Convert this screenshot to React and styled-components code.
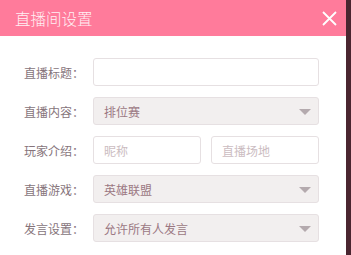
import React from "react";
import styled, { createGlobalStyle } from "styled-components";

const Global = createGlobalStyle`
  html, body { margin: 0; padding: 0; background: #4a2530; overflow: hidden; height: 100%; }
  body { font-family: "Noto Sans CJK SC", "Noto Sans", sans-serif; }
  #root { height: 100%; }
`;

const Dialog = styled.div`
  width: 346px;
  height: 100%;
  background: #fff;
`;

const Header = styled.div`
  height: 36px;
  background: #ff7b9b;
  display: flex;
  align-items: center;
  justify-content: space-between;
  padding: 0 9px 0 15px;
  box-sizing: border-box;
`;

const Title = styled.div`
  color: #fff0f4;
  font-size: 15.5px;
  font-weight: 300;
`;

const Close = styled.button`
  border: 0;
  background: transparent;
  padding: 0;
  width: 15px;
  height: 15px;
  display: flex;
  cursor: pointer;
`;

const Form = styled.div`
  display: flex;
  flex-direction: column;
  gap: 11px;
  padding: 22px 27px 0 24px;
`;

const Row = styled.div`
  display: flex;
  align-items: center;
  height: 28px;
`;

const Label = styled.div`
  width: 69px;
  font-size: 12px;
  color: #86747b;
  white-space: nowrap;
`;

const Fields = styled.div`
  flex: 1;
  display: flex;
  gap: 10px;
  height: 100%;
`;

const Input = styled.div`
  flex: 1;
  box-sizing: border-box;
  height: 100%;
  border: 1px solid #e6e0e2;
  border-radius: 3px;
  background: #fff;
  display: flex;
  align-items: center;
  padding-left: 10px;
  font-size: 12px;
  color: #cbbcc1;
`;

const Select = styled(Input)`
  background: #f2efef;
  color: #9b7883;
  justify-content: space-between;
  padding-right: 7px;
`;

const Arrow = styled.span`
  width: 0;
  height: 0;
  border-left: 6px solid transparent;
  border-right: 6px solid transparent;
  border-top: 6px solid #b4aaae;
  margin-top: 1px;
`;

export default function App() {
  return (
    <>
      <Global />
      <Dialog>
        <Header>
          <Title>直播间设置</Title>
          <Close aria-label="close">
            <svg width="15" height="15" viewBox="0 0 15 15">
              <path d="M1 1L14 14M14 1L1 14" stroke="#fff" strokeWidth="1.8" />
            </svg>
          </Close>
        </Header>
        <Form>
          <Row>
            <Label>直播标题：</Label>
            <Fields><Input /></Fields>
          </Row>
          <Row>
            <Label>直播内容：</Label>
            <Fields><Select>排位赛<Arrow /></Select></Fields>
          </Row>
          <Row>
            <Label>玩家介绍：</Label>
            <Fields>
              <Input>昵称</Input>
              <Input>直播场地</Input>
            </Fields>
          </Row>
          <Row>
            <Label>直播游戏：</Label>
            <Fields><Select>英雄联盟<Arrow /></Select></Fields>
          </Row>
          <Row>
            <Label>发言设置：</Label>
            <Fields><Select>允许所有人发言<Arrow /></Select></Fields>
          </Row>
        </Form>
      </Dialog>
    </>
  );
}
